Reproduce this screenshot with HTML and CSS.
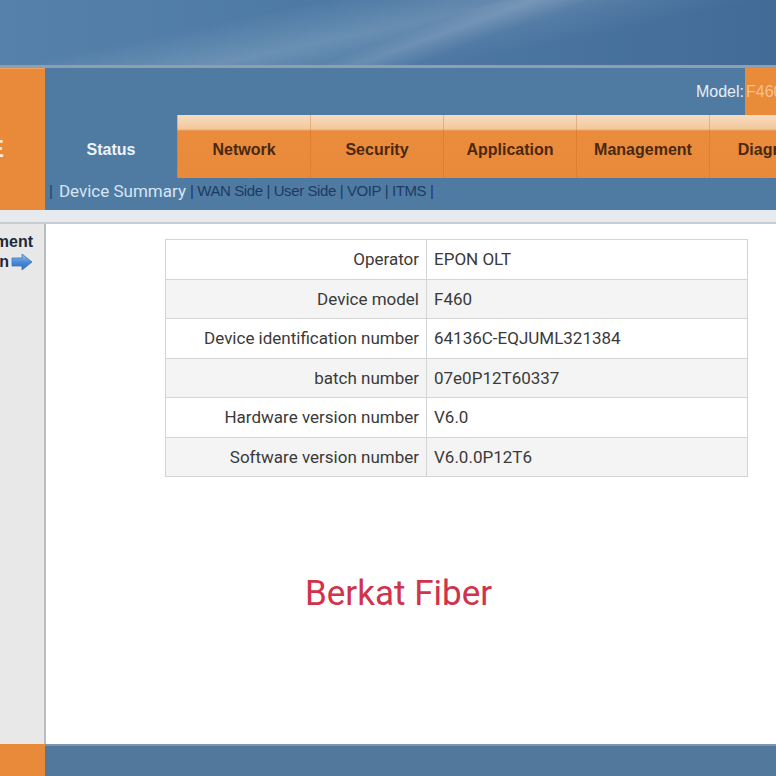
FILE: index.html
```html
<!DOCTYPE html>
<html>
<head>
<meta charset="utf-8">
<link rel="stylesheet" href="styles.css">
</head>
<body>
<div class="page">
  <div class="banner"></div>
  <div class="top">
    <div class="brand"><span class="logo">ZTE</span></div>
    <div class="bars">
      <div class="modelbar">
        <span class="model">Model:</span>
        <span class="modelval">F460</span>
      </div>
      <div class="tabs">
        <div class="tab active">Status</div>
        <div class="tab">Network</div>
        <div class="tab">Security</div>
        <div class="tab">Application</div>
        <div class="tab">Management</div>
        <div class="tab">Diagnosis</div>
      </div>
      <div class="subnav">
        <span class="sep">|</span><span class="cur">Device Summary</span><span class="others">| WAN Side | User Side | VOIP | ITMS |</span>
      </div>
    </div>
  </div>
  <div class="strip"></div>
  <div class="body">
    <div class="side">
      <div class="sline">Management</div>
      <div class="sline">Information<svg class="arrow" width="22" height="18" viewBox="0 0 22 18"><defs><linearGradient id="ag" x1="0" y1="0" x2="0" y2="1"><stop offset="0" stop-color="#9cc8f0"/><stop offset="0.5" stop-color="#4a8ad6"/><stop offset="1" stop-color="#2f6cb8"/></linearGradient></defs><path d="M1 5 H11 V1 L21 9 L11 17 V13 H1 Z" fill="url(#ag)" stroke="#3b74b8" stroke-width="0.8"/></svg></div>
    </div>
    <div class="panel">
      <table class="info">
        <tr><td class="k">Operator</td><td class="v">EPON OLT</td></tr>
        <tr class="alt"><td class="k">Device model</td><td class="v">F460</td></tr>
        <tr><td class="k">Device identification number</td><td class="v">64136C-EQJUML321384</td></tr>
        <tr class="alt"><td class="k">batch number</td><td class="v">07e0P12T60337</td></tr>
        <tr><td class="k">Hardware version number</td><td class="v">V6.0</td></tr>
        <tr class="alt"><td class="k">Software version number</td><td class="v">V6.0.0P12T6</td></tr>
      </table>
      <div class="watermark">Berkat Fiber</div>
    </div>
  </div>
  <div class="foot">
    <div class="footl"></div>
    <div class="footr"></div>
  </div>
</div>
</body>
</html>
```
FILE: styles.css
```css
html, body {
  margin: 0;
  padding: 0;
  background: #ffffff;
  overflow: hidden;
}
.page {
  width: 776px;
  height: 776px;
  overflow: hidden;
  display: flex;
  flex-direction: column;
  font-family: "Liberation Sans", Arial, sans-serif;
}
.banner {
  height: 65px;
  flex: none;
  border-bottom: 3px solid #8e9fae;
  background:
    linear-gradient(160deg, rgba(255,255,255,0) 52%, rgba(255,255,255,0.12) 56%, rgba(255,255,255,0) 62%),
    linear-gradient(168deg, rgba(255,255,255,0) 30%, rgba(255,255,255,0.16) 48%, rgba(255,255,255,0.05) 60%, rgba(255,255,255,0) 70%),
    linear-gradient(90deg, #5581aa 0%, #4d7aa5 40%, #4a74a0 70%, #426b98 100%);
}
.top {
  display: flex;
  flex: none;
  height: 142px;
}
.brand {
  width: 45px;
  flex: none;
  background: #e98a3a;
  display: flex;
  justify-content: flex-end;
  align-items: center;
  overflow: hidden;
  box-shadow: inset 0 45px 0 -44px #f0a25c, inset 0 107px 0 -106px #f0a25c;
}
.logo {
  color: #fbe7d4;
  font-weight: bold;
  font-size: 24px;
  margin-right: 41px;
  margin-top: 20px;
  white-space: nowrap;
}
.bars {
  flex: 1;
  display: flex;
  flex-direction: column;
  min-width: 0;
}
.modelbar {
  height: 47px;
  display: flex;
  align-items: center;
  justify-content: flex-end;
  background: #4f7ba2;
}
.model {
  color: #e8eef5;
  font-size: 16px;
  padding-right: 1px;
}
.modelval {
  align-self: stretch;
  display: flex;
  align-items: center;
  width: 30px;
  padding-left: 1px;
  background: #ea8b3a;
  color: #f6c18e;
  font-size: 16px;
  white-space: nowrap;
  overflow: hidden;
}
.tabs {
  height: 63px;
  display: flex;
  background: linear-gradient(180deg, #f7dcc0 0px, #f3c89c 14px, #ea8c3c 16px, #e98a3a 100%);
}
.tab {
  width: 133px;
  flex: none;
  display: flex;
  align-items: center;
  justify-content: center;
  padding-top: 7px;
  box-sizing: border-box;
  font-weight: bold;
  font-size: 16px;
  color: #4a2810;
  border-left: 1px solid rgba(200,110,40,0.35);
}
.tab.active {
  width: 132px;
  background: #4f7ba2;
  color: #eef3f8;
  border-left: none;
}
.subnav {
  height: 32px;
  background: #4f7ba2;
  display: flex;
  align-items: center;
  font-size: 16px;
  white-space: nowrap;
  padding-left: 4px;
  padding-bottom: 7px;
  box-sizing: border-box;
}
.sep {
  color: #23406a;
  font-size: 15px;
  margin-right: 6px;
}
.cur {
  color: #d6e5f3;
  font-family: Roboto, "Liberation Sans", sans-serif;
  font-size: 17px;
}
.others {
  color: #1d3a63;
  font-size: 15px;
  letter-spacing: -0.4px;
  margin-left: 4px;
}
.strip {
  height: 12px;
  flex: none;
  background: #e6eaee;
  border-bottom: 2px solid #c9cdd1;
}
.body {
  flex: 1;
  display: flex;
  min-height: 0;
}
.side {
  width: 44px;
  flex: none;
  background: #e8e8e8;
  overflow: hidden;
  padding-top: 8px;
  display: flex;
  flex-direction: column;
  align-items: flex-end;
}
.sline {
  display: flex;
  align-items: center;
  justify-content: flex-end;
  white-space: nowrap;
  font-weight: bold;
  font-size: 16px;
  color: #1d2a3a;
  height: 20px;
  margin-right: 11px;
}
.arrow {
  margin-left: 2px;
  margin-right: -22px;
}
.sline + .sline {
  margin-right: 33px;
}
.panel {
  flex: 1;
  background: #ffffff;
  border-left: 2px solid #b8bcc0;
  padding-top: 15px;
  padding-left: 119px;
}
.info {
  border-collapse: collapse;
  width: 583px;
  font-family: Roboto, "Liberation Sans", sans-serif;
  font-size: 17px;
  color: #3a3a3a;
}
.info td {
  border: 1.5px solid #d4d4d4;
  height: 38.5px;
  padding: 0 7px;
}
.info tr.alt td {
  background: #f4f4f4;
}
.info td.k {
  width: 246px;
  text-align: right;
}
.info td.v {
  text-align: left;
}
.watermark {
  margin-top: 96px;
  margin-left: 140px;
  font-family: Roboto, "Liberation Sans", sans-serif;
  font-size: 35px;
  color: #d0334a;
}
.foot {
  height: 32px;
  flex: none;
  display: flex;
}
.footl {
  width: 45px;
  background: #e98a3a;
}
.footr {
  flex: 1;
  background: #52799c;
  border-top: 2px solid #7d96ad;
}
```
